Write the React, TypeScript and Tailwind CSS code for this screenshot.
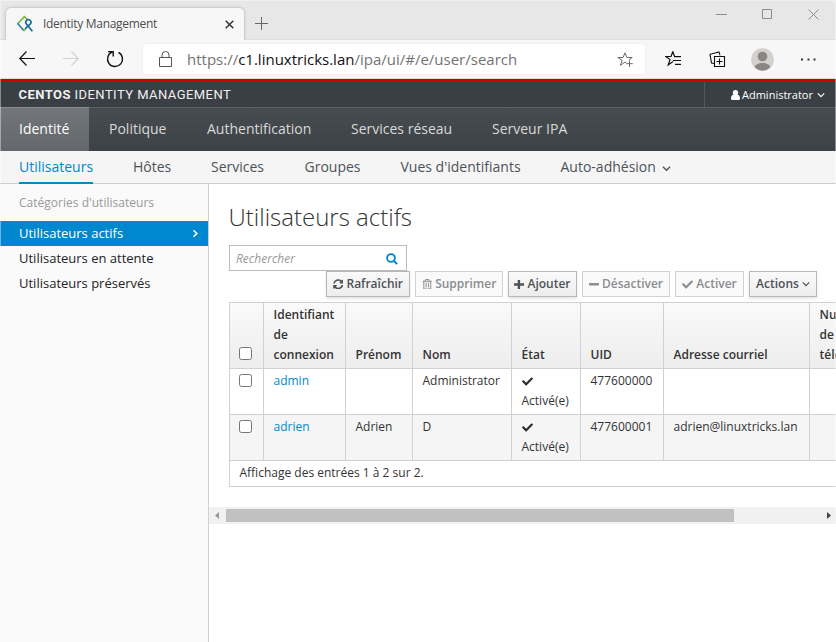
import type { ReactNode } from "react";
import { FaCheck, FaSyncAlt, FaRegTrashAlt } from "react-icons/fa";

const Chevron = ({ className = "", w = 8 }: { className?: string; w?: number }) => (
  <svg width={w} height={w} viewBox="0 0 8 8" fill="none" stroke="currentColor" strokeWidth="1.2" className={className}>
    <path d="M0.8 2.4 4 5.6 7.2 2.4" />
  </svg>
);

const Logo = () => (
  <svg width="18" height="18" viewBox="0 0 18 18" fill="none" strokeWidth="1.6" className="shrink-0">
    <path d="M1.8 8.6 8.4 1.6 12 5" stroke="#7cb83b" />
    <path d="M1.4 8.2 7.9 15.6" stroke="#2b7fa5" />
    <path d="M7.600 16 10.200 13.200" stroke="#7cb83b" />
    <path d="M9.200 13.600 14.200 9.100a2.600 2.600 0 1 0-3.800-.2L16.400 16.200" stroke="#146a96" />
  </svg>
);

function TabStrip() {
  return (
    <div className="flex h-[40px] items-end bg-[#e7e7e7] border-b border-[#dcdcdc]">
      <div className="-mb-px ml-[6px] flex h-[32px] w-[238px] items-center rounded-t-[5px] bg-[#f7f7f7] pl-[10px] pr-[9px] shadow-[0_0_3px_rgba(0,0,0,0.3)] [clip-path:inset(-4px_-4px_0_-4px)]">
        <Logo />
        <span className="ml-[9px] flex-1 whitespace-nowrap text-[12px] tracking-[-0.3px] text-[#4d4d4d]">Identity Management</span>
        <svg width="11" height="11" viewBox="0 0 11 11" stroke="#333" strokeWidth="1.5"><path d="m1.7 1.7 7.6 7.6M9.3 1.7 1.7 9.3" /></svg>
      </div>
      <svg width="13" height="13" viewBox="0 0 13 13" stroke="#666" className="mb-[9px] ml-[11px]"><path d="M6.5 0v13M0 6.5h13" /></svg>
      <div className="ml-auto mr-[17px] flex h-full items-start gap-[35px] pt-[9px]">
        <svg width="11" height="11" viewBox="0 0 11 11" stroke="#8c8c8c"><path d="M0 5.5h11" /></svg>
        <svg width="11" height="11" viewBox="0 0 11 11" stroke="#8c8c8c" fill="none"><path d="M.5.5h9v9H.5z" /></svg>
        <svg width="11" height="11" viewBox="0 0 11 11" stroke="#8c8c8c"><path d="m.5.5 10 10M10.5.5l-10 10" /></svg>
      </div>
    </div>
  );
}

function Toolbar() {
  return (
    <div className="flex h-[39px] items-center border-b border-[#d9dcdc] bg-[#f7f7f7]">
      <svg width="16" height="15" viewBox="0 0 16 15" fill="none" stroke="#111" strokeWidth="1.2" className="-mt-px ml-[19px]"><path d="M7.5.5.8 7.5l6.7 7M.8 7.5H16" /></svg>
      <svg width="16" height="15" viewBox="0 0 16 15" fill="none" stroke="#d0d0d0" strokeWidth="1.2" className="-mt-px ml-[28px]"><path d="m8.5.5 6.7 7-6.7 7M15.2 7.5H0" /></svg>
      <svg width="18" height="18" viewBox="0 0 18 18" fill="none" stroke="#111" strokeWidth="1.4" className="ml-[27px]"><path d="M6 2.2a7.5 7.5 0 1 0 6.5.2M2.2 1.7h5v4.7" /></svg>
      <div className="ml-[19px] flex h-[30px] w-[502px] items-center rounded-[4px] bg-white shadow-[0_0_2px_rgba(0,0,0,0.08)]">
        <svg width="13" height="17" viewBox="0 0 13 17" fill="none" stroke="#555" className="ml-[16px]"><path d="M.5 6.5h12v9H.5zM3 6.5V4a3.5 3.5 0 0 1 7 0v2.5" /></svg>
        <span className="ml-[15px] flex-1 whitespace-nowrap text-[15px] text-[#737373]">
          https://<span className="text-[#111]">c1.linuxtricks.lan</span>/ipa/ui/#/e/user/search
        </span>
        <svg width="17" height="16" viewBox="0 0 17 16" fill="none" stroke="#6b6b6b" className="mr-[11px] mt-px"><path d="M9.5 11 8 10l-4.6 3.4L5.1 8.3.8 5.5h5.300L8 .8l1.9 4.700h5.300L12 8M12.500 8.500v6.500M9.300 11.700h6.500" /></svg>
      </div>
      <svg width="17" height="16" viewBox="0 0 17 16" fill="none" stroke="#111" strokeWidth="1.200" className="ml-[20px]"><path d="M8 10.500 3.200 14 5 8.600.8 5.500h5.200L7.800.8l1.800 4.700M9 5.600h7M8 9.500h8M10 13.400h6" /></svg>
      <svg width="17" height="17" viewBox="0 0 17 17" fill="none" stroke="#111" strokeWidth="1.100" className="ml-[27px]"><path d="M5.500 5.500h10v10h-10zM10.500 7.500v6M7.500 10.500h6M5 12.500l-2.500-.5L1 3.300 10 .9l1 3.500" /></svg>
      <svg width="23" height="23" viewBox="0 0 23 23" className="ml-[25px]">
        <circle cx="11.500" cy="11.500" r="11.300" fill="#d3d0cd" />
        <circle cx="11.500" cy="8.500" r="4.800" fill="#8a8684" />
        <path d="M3.800 19.600c0-6.300 15.400-6.300 15.400 0a11.300 11.300 0 0 1-15.400 0" fill="#8a8684" />
      </svg>
      <svg width="15" height="3" viewBox="0 0 15 3" fill="#333" className="ml-[27px]"><path d="M0 .5h2v2H0zM6.500.5h2v2h-2zM12.500.5h2v2h-2z" /></svg>
    </div>
  );
}

function Masthead() {
  return (
    <div className="flex h-[25px] justify-between bg-[#393f45]">
      <div className="whitespace-nowrap pl-[18.500px] font-['Roboto',sans-serif] text-[13px] leading-[25px] tracking-[0.450px] text-[#f0f0f0]">
        <b>CENTOS</b> IDENTITY MANAGEMENT
      </div>
      <div className="flex w-[132px] items-center border-l border-[#54585c] pl-[26px] text-[11px] text-white">
        <svg width="9" height="10" viewBox="0 0 9 10" fill="white"><path d="M4.500 0a2.600 2.600 0 0 1 1.900 4.500C8.300 4.900 9 6.800 9 8.400 9 9.400 8.300 10 7.500 10h-6C.7 10 0 9.400 0 8.400c0-1.600.7-3.500 2.600-3.900A2.600 2.600 0 0 1 4.500 0" /></svg>
        <span className="ml-[2px] mt-[2px] w-[72px] whitespace-nowrap">Administrator</span>
        <Chevron className="ml-[3px]" />
      </div>
    </div>
  );
}

function Nav() {
  return (
    <div className="flex h-[44px] border-t border-[#5b6063] bg-linear-to-b from-[#474c50] to-[#3d4246] text-[14px] leading-[41px] text-[#d9d9d9]">
      <div className="-mt-px w-[89px] whitespace-nowrap border-t border-[#8a8c8e] bg-linear-to-b from-[#72757a] to-[#64676b] pl-[19px] text-white">Identité</div>
      <div className="w-[98px] whitespace-nowrap pl-[20px]">Politique</div>
      <div className="w-[144px] whitespace-nowrap pl-[20px]">Authentification</div>
      <div className="w-[141px] whitespace-nowrap pl-[20px]">Services réseau</div>
      <div className="whitespace-nowrap pl-[20px]">Serveur IPA</div>
    </div>
  );
}

function SubNav() {
  return (
    <div className="flex h-[33px] border-b border-[#cecdcd] bg-[#f5f5f5] pl-[19px] text-[14px] leading-[31px] text-[#4d5258]">
      <div className="h-[33px] w-[74px] whitespace-nowrap border-b-2 border-[#0088ce] text-[#0088ce]">Utilisateurs</div>
      <div className="ml-[40px] w-[78px] whitespace-nowrap">Hôtes</div>
      <div className="w-[93.500px] whitespace-nowrap">Services</div>
      <div className="w-[96px] whitespace-nowrap">Groupes</div>
      <div className="w-[160px] whitespace-nowrap">Vues d'identifiants</div>
      <div className="flex h-[31px] items-center whitespace-nowrap"><span className="w-[96px]">Auto-adhésion</span><Chevron w={9} className="ml-[5px] mt-[4px]" /></div>
    </div>
  );
}

function Sidebar() {
  return (
    <div className="w-[209px] shrink-0 border-r border-[#d1d1d1] bg-[#fafafa] pt-[6px] text-[13px] leading-[25px] text-[#222]">
      <div className="mb-[6px] pl-[19px] text-[12px] tracking-[0.020px] text-[#999]">Catégories d'utilisateurs</div>
      <div className="flex items-center justify-between bg-[#0088ce] pl-[19px] pr-[8px] text-white">
        Utilisateurs actifs
        <svg width="9" height="9" viewBox="0 0 9 9" fill="none" stroke="currentColor" strokeWidth="1.600"><path d="m2.500 1.200 3.300 3.300-3.300 3.300" /></svg>
      </div>
      <div className="pl-[19px]">Utilisateurs en attente</div>
      <div className="pl-[19px]">Utilisateurs préservés</div>
    </div>
  );
}

const on = "border-[#b7b7b7] bg-linear-to-b from-[#fafafa] to-[#ededed] text-[#4d5258] shadow-[0_2px_3px_rgba(3,3,3,0.1)]";
const off = "border-[#d1d1d1] bg-[#fafafa] text-[#8b8d8f]";

function Btn({ w, active, children }: { w: string; active?: boolean; children: ReactNode }) {
  return (
    <div className={`flex h-[26px] items-center justify-center gap-[3px] whitespace-nowrap border text-[12px] font-semibold ${w} ${active ? on : off}`}>
      {children}
    </div>
  );
}

const Plus = () => (
  <svg width="10" height="9" viewBox="0 0 10 9" fill="currentColor"><path d="M3.700 0h2.400v3.300H10v2.400H6.100V9H3.700V5.700H0V3.300h3.700z" /></svg>
);
const Minus = () => (
  <svg width="10" height="9" viewBox="0 0 10 9" fill="currentColor"><rect y="3" width="10" height="2.600" rx=".5" /></svg>
);

const Check = () => <div className="ml-[9px] mt-[3px] size-[13px] rounded-[2.500px] border border-[#767676] bg-white" />;
const State = () => (
  <>
    <FaCheck size={11} className="mt-[5px] mb-[4px] text-[#292e34]" />
    <div>Activé(e)</div>
  </>
);

const heads = ["Prénom", "Nom", "État", "UID", "Adresse courriel"];
const users = [
  { login: "admin", first: "", last: "Administrator", uid: "477600000", mail: "" },
  { login: "adrien", first: "Adrien", last: "D", uid: "477600001", mail: "adrien@linuxtricks.lan" },
];
const grid = "grid grid-cols-[34px_82px_67px_99px_69px_83px_146px_120px] border-t border-[#d1d1d1]";
const cell = "border-l border-[#d1d1d1] pl-[9.500px] pt-[2px] whitespace-nowrap";

function Table() {
  return (
    <div className="ml-[20px] mt-[5px] w-[700px] text-[12px] leading-[20px] text-[#333]">
      <div className={`${grid} h-[66px] bg-linear-to-b from-[#fafafa] to-[#ededed] font-semibold`}>
        <div className="flex items-end border-l border-[#d1d1d1] pb-[8px]"><Check /></div>
        <div className={cell}>Identifiant<br />de<br />connexion</div>
        {heads.map((h) => <div key={h} className={`${cell} flex items-end pb-[3px]`}>{h}</div>)}
        <div className={cell}>Numéro<br />de<br />téléphone</div>
      </div>
      {users.map((u, i) => (
        <div key={u.login} className={`${grid} h-[46px] ${i ? "bg-[#f5f5f5]" : "bg-white"}`}>
          <div className="border-l border-[#d1d1d1] pt-[2px]"><Check /></div>
          <div className={`${cell} text-[#0088ce]`}>{u.login}</div>
          <div className={cell}>{u.first}</div>
          <div className={cell}>{u.last}</div>
          <div className={cell}><State /></div>
          <div className={cell}>{u.uid}</div>
          <div className={cell}>{u.mail}</div>
          <div className={cell} />
        </div>
      ))}
      <div className="h-[27px] border border-r-0 border-[#d1d1d1] pl-[9.500px] pt-[2px]">Affichage des entrées 1 à 2 sur 2.</div>
    </div>
  );
}

function Content() {
  return (
    <div className="min-w-0 flex-1 overflow-hidden bg-white">
      <h1 className="mt-[17px] pl-[19.500px] text-[24px] font-light leading-[32px] text-[#333]">Utilisateurs actifs</h1>
      <div className="ml-[20px] mt-[12px] flex h-[26px] w-[178px] items-center justify-between border border-[#bbb] pl-[6px] pr-[8px]">
        <span className="mt-[2px] text-[12px] italic text-[#999]">Rechercher</span>
        <svg width="12" height="12" viewBox="0 0 12 12" fill="none" stroke="#0088ce" strokeWidth="1.900" className="mt-px"><circle cx="5" cy="5" r="3.900" /><path d="m8 8 3.200 3.200" /></svg>
      </div>
      <div className="ml-[117px] flex gap-[5px]">
        <Btn w="w-[84px]" active><FaSyncAlt size={10.5} />Rafraîchir</Btn>
        <Btn w="w-[88px]"><FaRegTrashAlt size={10.5} />Supprimer</Btn>
        <Btn w="w-[69px]" active><Plus />Ajouter</Btn>
        <Btn w="w-[88px]"><Minus />Désactiver</Btn>
        <Btn w="w-[69px]"><FaCheck size={11} />Activer</Btn>
        <Btn w="w-[68px]" active>Actions<Chevron w={8} /></Btn>
      </div>
      <Table />
      <div className="mt-[20px] flex h-[17px] items-center bg-[#f1f1f1]">
        <svg width="17" height="17" viewBox="0 0 17 17" fill="#999"><path d="M10 5v7L6 8.500z" /></svg>
        <div className="h-[13px] w-[508px] bg-[#c1c1c1]" />
        <svg width="17" height="17" viewBox="0 0 17 17" fill="#444" className="ml-auto"><path d="M8 5v7l4-3.500z" /></svg>
      </div>
    </div>
  );
}

export default function App() {
  return (
    <div className="relative flex h-[642px] w-[836px] flex-col overflow-hidden bg-white font-['Open_Sans',sans-serif]">
      <TabStrip />
      <Toolbar />
      <div className="h-[3px] bg-[#c00]" />
      <Masthead />
      <Nav />
      <SubNav />
      <div className="flex min-h-0 flex-1">
        <Sidebar />
        <Content />
      </div>
      <div className="pointer-events-none absolute inset-0 border border-b-0 border-white/40" />
    </div>
  );
}
